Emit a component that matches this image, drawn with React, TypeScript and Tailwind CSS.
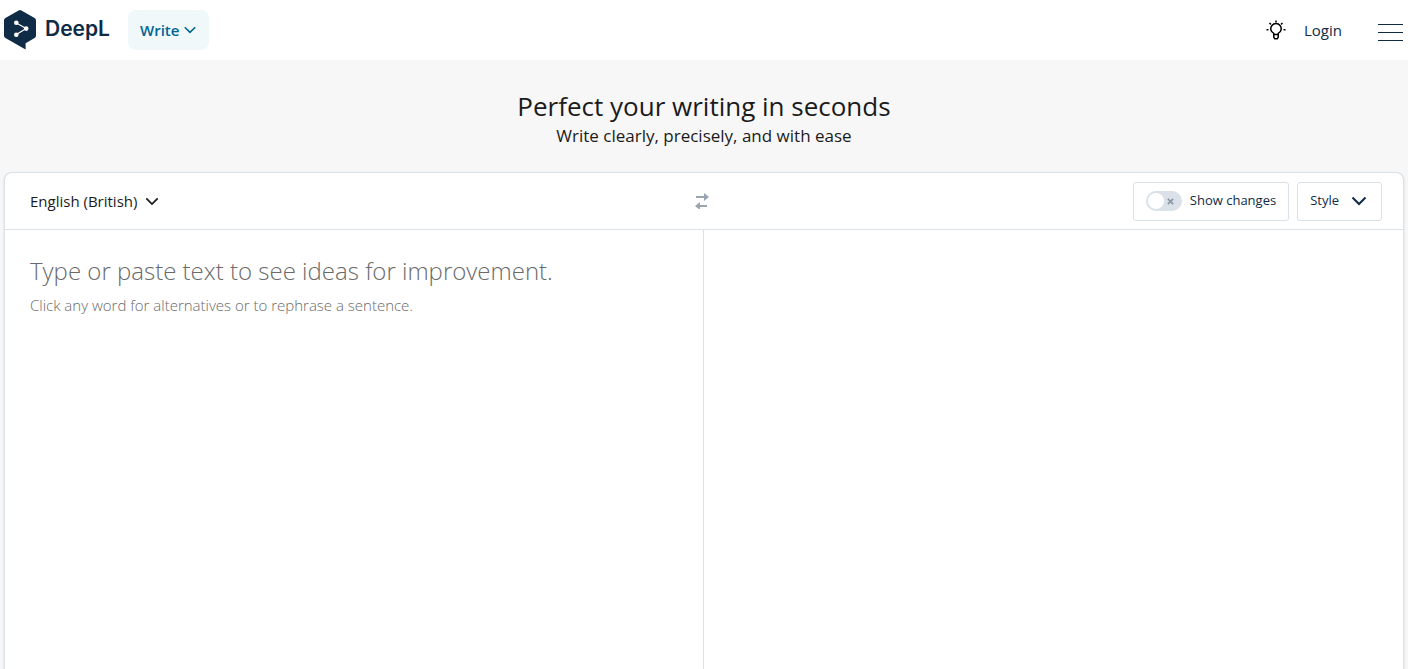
import { useState } from "react";

function ChevronDown({ className }: { className?: string }) {
  return (
    <svg viewBox="0 0 16 10" fill="none" stroke="currentColor" strokeWidth="2" className={className} aria-hidden="true">
      <path d="M1.500 1.500 8 8l6.500-6.500" />
    </svg>
  );
}

function Logo() {
  return (
    <a href="/" className="flex items-center gap-[9px] text-[#0f2b46]">
      <svg viewBox="0 0 32 40" className="h-10 w-8" aria-hidden="true">
        <path
          d="M14.600.400a3 3 0 0 1 2.800 0L30.600 8A2.800 2.800 0 0 1 32 10.400v15.200a2.800 2.800 0 0 1-1.400 2.400l-9 5.200v6.300L1.400 28A2.800 2.800 0 0 1 0 25.600V10.400A2.800 2.800 0 0 1 1.400 8Z"
          fill="currentColor"
        />
        <path d="m12.300 13 9.900 5.600-9.900 6" fill="none" stroke="#fff" strokeWidth="1.200" />
        <circle cx="12.300" cy="12.800" r="2.300" fill="#fff" />
        <circle cx="22.200" cy="18.600" r="2.300" fill="#fff" />
        <circle cx="12.300" cy="24.800" r="2.300" fill="#fff" />
      </svg>
      <span className="w-[66px] pb-[2px] font-['Inter',sans-serif] text-[21px] leading-8 font-semibold">DeepL</span>
    </a>
  );
}

function Header() {
  return (
    <header className="flex h-15 items-center justify-between bg-white pr-[5px] pl-1">
      <div className="flex items-center gap-[17px]">
        <Logo />
        <button className="flex h-10 items-center gap-1 rounded-lg bg-[#f0f8fa] px-3 text-[15px] font-semibold text-[#006494]">
          Write
          <ChevronDown className="h-2 w-[14px]" />
        </button>
      </div>
      <div className="flex items-center">
        <button aria-label="What's new" className="mr-4 text-black">
          <svg viewBox="0 0 24 24" fill="none" stroke="currentColor" strokeWidth="1.500" className="size-6">
            <path d="M9.800 17v-1.600A5.200 5.200 0 1 1 14.200 15.400v1.600" />
            <path d="M9.800 16.500h4.400v2.800l-1 1.500h-2.400l-1-1.500Z" />
            <path d="M12 2.500v2M5.500 5l1.400 1.400M18.500 5l-1.400 1.400M2.500 11.800h2M19.500 11.800h2" />
          </svg>
        </button>
        <a href="/login" className="mr-9 text-[15px] text-[#0f2b46]">
          Login
        </a>
        <button aria-label="Menu" className="mt-1 flex w-[25px] flex-col gap-[7px]">
          <span className="h-px w-full bg-[#0f2b46]" />
          <span className="h-px w-full bg-[#0f2b46]" />
          <span className="h-px w-full bg-[#0f2b46]" />
        </button>
      </div>
    </header>
  );
}

export default function App() {
  const [text, setText] = useState("");
  const [showChanges, setShowChanges] = useState(false);

  return (
    <div className="flex min-h-screen flex-col bg-[#f7f7f7] font-['Open_Sans','Noto_Sans',sans-serif] text-[#1b1b1b]">
      <Header />

      {/* Title */}
      <section className="pt-7 pb-6 text-center">
        <h1 className="text-[26px] leading-9">Perfect your writing in seconds</h1>
        <p className="text-[17px] leading-6">Write clearly, precisely, and with ease</p>
      </section>

      {/* Editor */}
      <main className="mx-1 flex flex-1 flex-col rounded-t-lg border border-b-0 border-[#dae1e8] bg-white shadow-sm">
        <div className="grid h-[57px] grid-cols-[1fr_auto_1fr] items-center border-b border-[#dae1e8] pr-[21px] pl-4">
          <button className="flex items-center gap-2 pl-[9px] text-[15px]">
            English (British)
            <ChevronDown className="h-[9px] w-[14px]" />
          </button>
          <button aria-label="Switch sides" className="text-[#9aa5b1]">
            <svg viewBox="0 0 16 16" className="size-4" stroke="currentColor" strokeWidth="2" aria-hidden="true">
              <path d="M2 4h9M5 13h8" />
              <path d="m10 0 5 4-5 4ZM6 9l-5 4 5 4Z" fill="currentColor" stroke="none" />
            </svg>
          </button>
          <div className="flex justify-end gap-2 text-[13px] text-[#0f2b46]">
            <label className="flex h-[39px] items-center gap-2 rounded-[3px] border border-[#dae1e8] px-3">
              <input
                type="checkbox"
                checked={showChanges}
                onChange={(e) => setShowChanges(e.target.checked)}
                className="peer sr-only"
              />
              <span className="flex h-5 w-9 items-center justify-between rounded-full bg-[#dae1e8] p-[2px] pr-2 peer-checked:flex-row-reverse peer-checked:bg-[#006494]">
                <span className="size-4 rounded-full bg-white" />
                <svg viewBox="0 0 8 8" className="size-[7px]" stroke="#8d98a5" strokeWidth="2" aria-hidden="true">
                  <path d="m1 1 6 6M7 1 1 7" />
                </svg>
              </span>
              Show changes
            </label>
            <button className="flex h-[39px] items-center gap-3 rounded-[3px] border border-[#dae1e8] pr-[14px] pl-3">
              Style
              <ChevronDown className="h-[10px] w-4" />
            </button>
          </div>
        </div>

        <div className="grid flex-1 grid-cols-2">
          <div className="relative border-r border-[#dae1e8]">
            <textarea
              id="source"
              value={text}
              onChange={(e) => setText(e.target.value)}
              className="block h-full w-full resize-none px-[25px] py-6 text-2xl font-light outline-none"
            />
            {text === "" && (
              <label
                htmlFor="source"
                className="pointer-events-none absolute inset-x-[25px] top-[23px] font-light text-[#6a6a6a]"
              >
                <span className="block text-2xl leading-9">Type or paste text to see ideas for improvement.</span>
                <span className="block text-[15px] leading-8">
                  Click any word for alternatives or to rephrase a sentence.
                </span>
              </label>
            )}
          </div>
          <div />
        </div>
      </main>
    </div>
  );
}
